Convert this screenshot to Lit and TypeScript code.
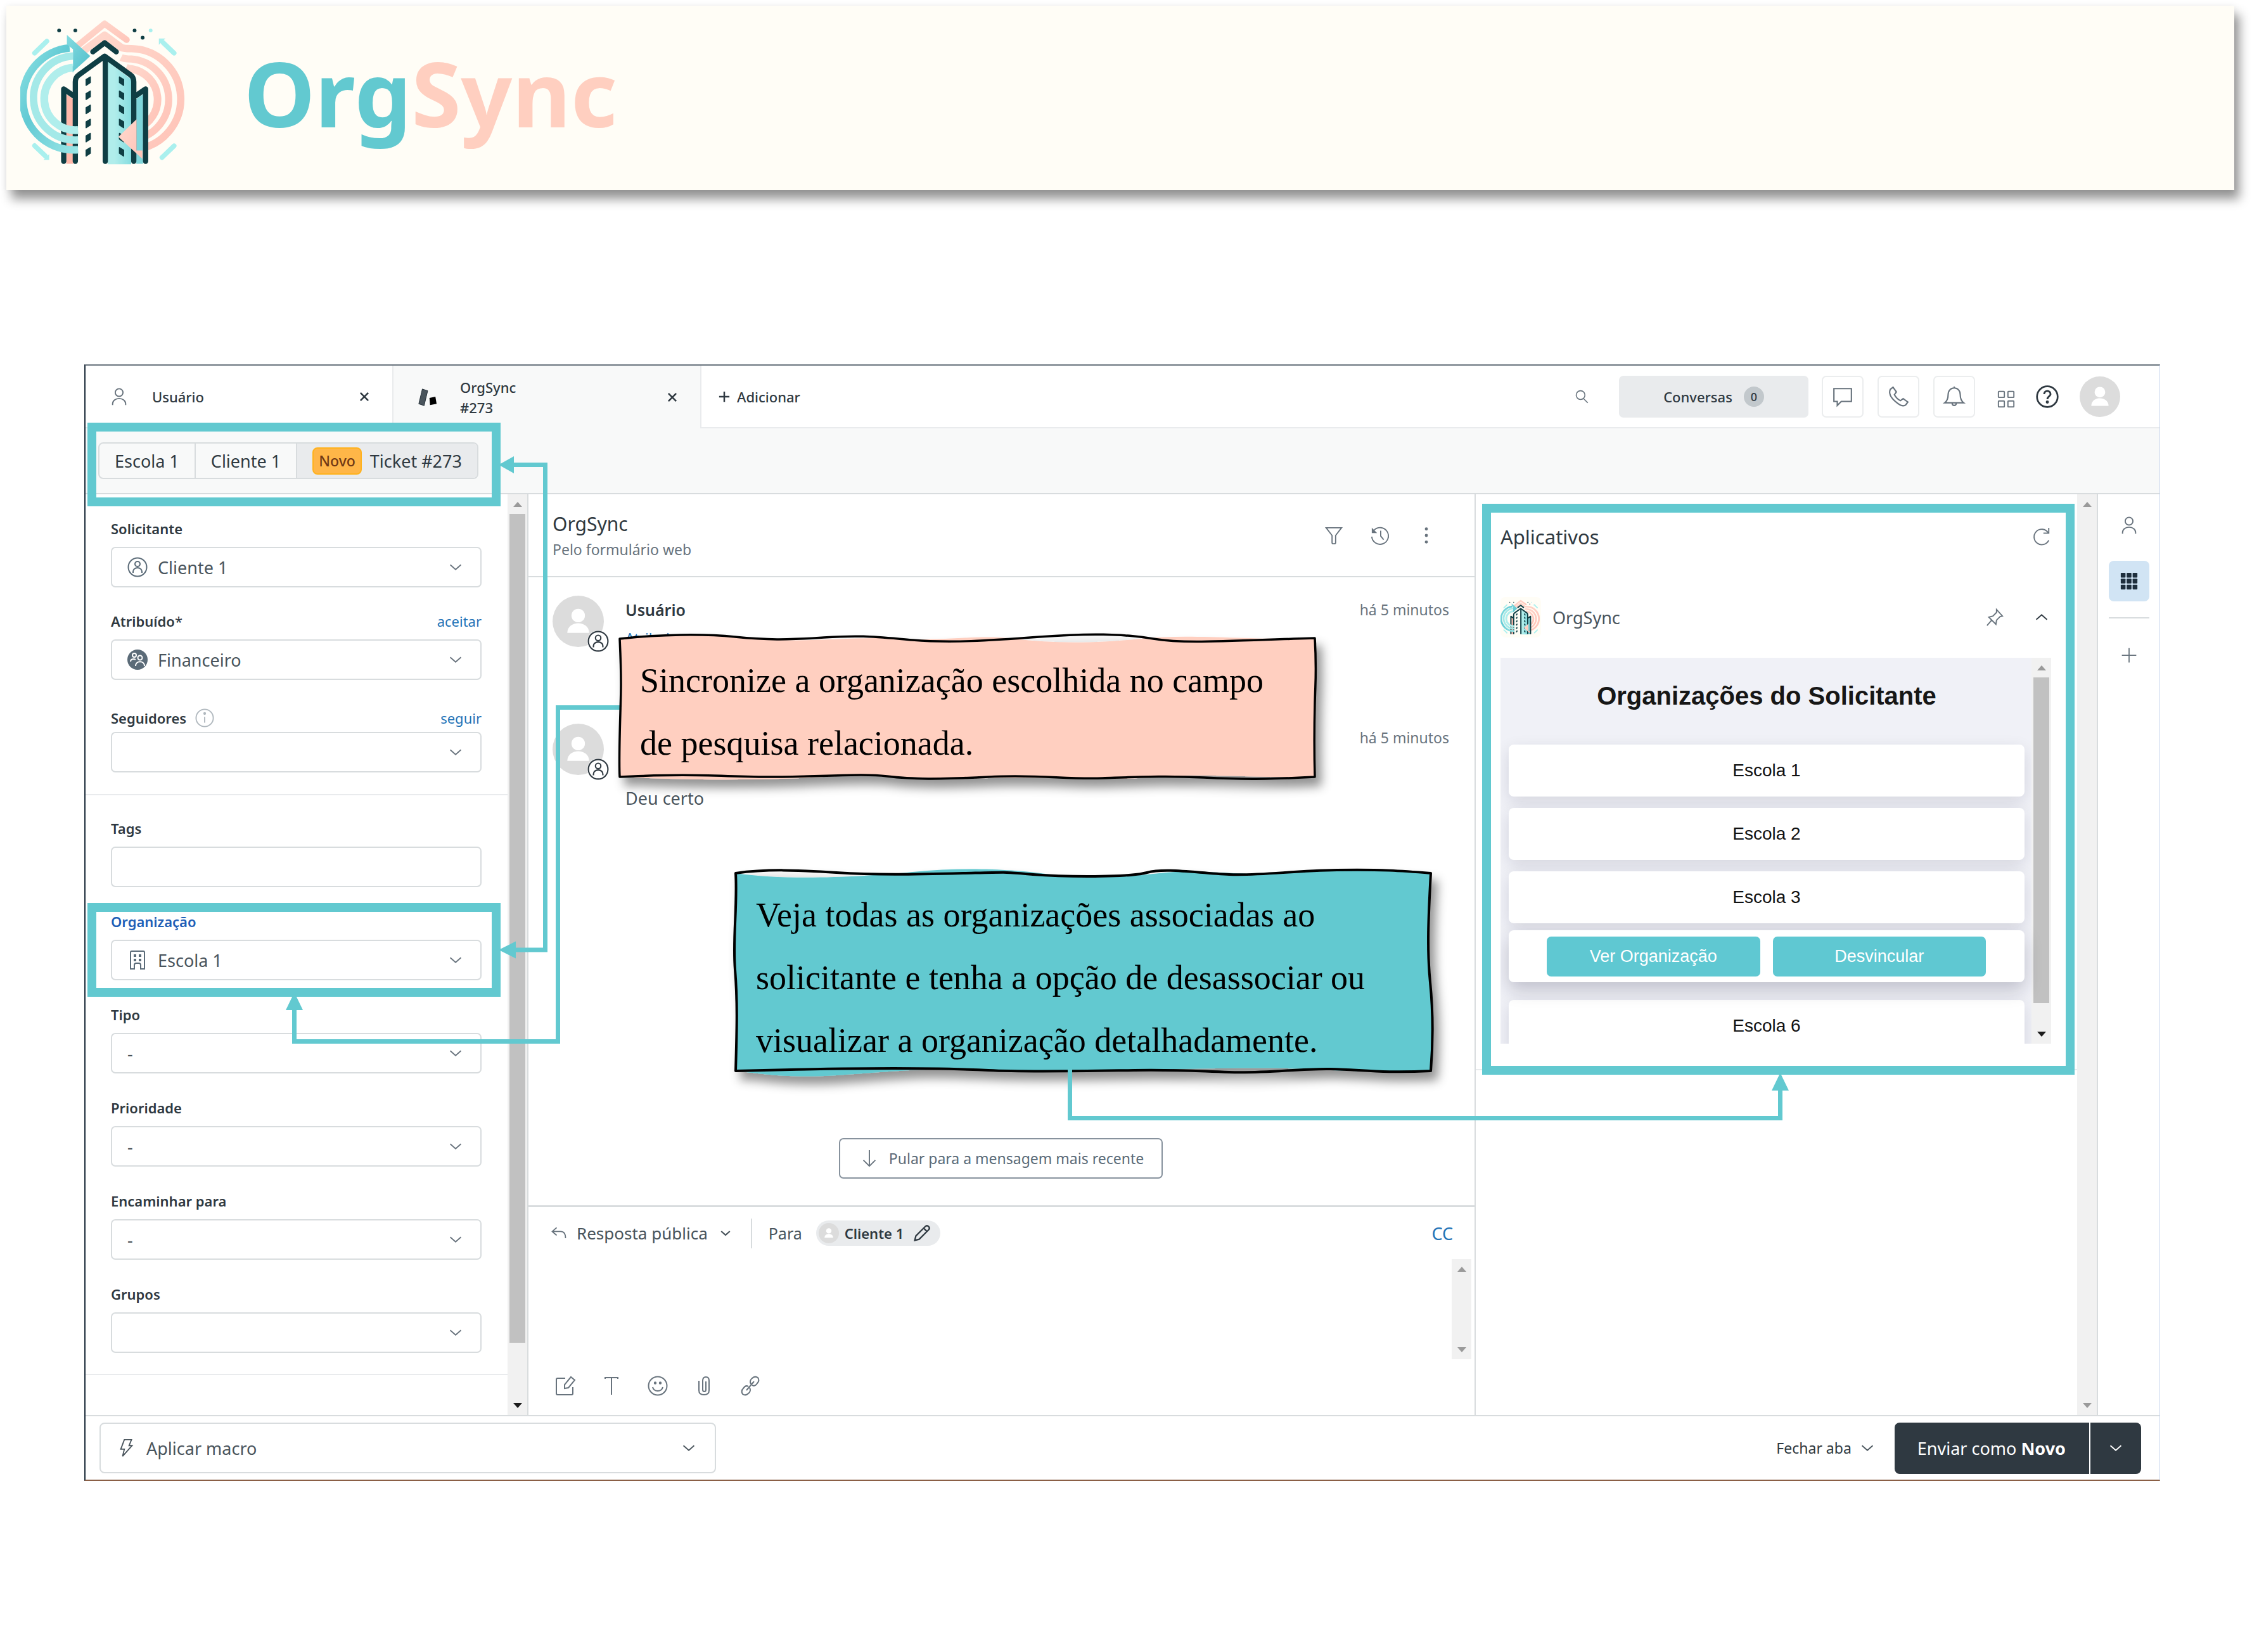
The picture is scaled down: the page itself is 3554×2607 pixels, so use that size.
import { LitElement, html, svg, css, nothing, type TemplateResult } from "lit";
import { customElement, property } from "lit/decorators.js";

/* Line icons, all drawn in a 32 x 32 box. */
const icons: Record<string, TemplateResult> = {
  user: svg`<circle cx="16" cy="9" r="6.5"/><path d="M5 30v-2a11 9 0 0 1 22 0v2"/>`,
  chevron: svg`<path d="M7 12l9 8 9-8"/>`,
  chevronUp: svg`<path d="M7 20l9-8 9 8"/>`,
  close: svg`<path d="M9 9l14 14M23 9L9 23" stroke-width="3"/>`,
  plus: svg`<path d="M16 3v26M3 16h26"/>`,
  search: svg`<circle cx="14" cy="13" r="8.5"/><path d="M20 20l8 8"/>`,
  chat: svg`<path d="M3 4h26v19H14l-6 6v-6H3z"/>`,
  phone: svg`<path d="M4 5l4-3 5 7-3 4c2 4 5 7 9 9l4-3 7 5-3 4c-3 3-8 1-12-2S6 19 4 14s-1-7 0-9z"/>`,
  bell: svg`<path d="M2 25h28c-4-3-5-6-5-12 0-6-4-10-9-10s-9 4-9 10c0 6-1 9-5 12zM13 26a3 3 0 0 0 6 0M16 3V1"/>`,
  grid: svg`<rect x="3" y="4" width="10" height="10" rx="1"/><rect x="19" y="4" width="10" height="10" rx="1"/><rect x="3" y="20" width="10" height="10" rx="1"/><rect x="19" y="20" width="10" height="10" rx="1"/>`,
  help: svg`<circle cx="16" cy="16" r="14.5" stroke-width="2.4"/><path d="M11.500 12.500c0-6 9-6 9 0 0 3-4.500 3-4.500 7" stroke-width="2.600"/><circle cx="16" cy="23.500" r="1.200" fill="currentColor"/>`,
  person: svg`<circle cx="16" cy="16" r="14.5"/><circle cx="16" cy="11" r="4"/><path d="M9 25v-2a7 6 0 0 1 14 0v2"/>`,
  group: svg`<circle cx="16" cy="16" r="16" fill="currentColor" stroke="none"/><g stroke="#fff" stroke-width="2"><circle cx="11" cy="9" r="3"/><circle cx="20" cy="13" r="3.500"/><path d="M5 19c0-4 5-5 8-3M13 26c0-9 14-9 14 0"/></g>`,
  info: svg`<circle cx="16" cy="16" r="14.500"/><path d="M16 14v10"/><circle cx="16" cy="8.500" r="1.300" fill="currentColor"/>`,
  building: svg`<path d="M5 30V4q0-2 2-2h18q2 0 2 2v26h-6v-6q0-3-3-3h-4q-3 0-3 3v6z"/><g fill="currentColor" stroke="none"><rect x="10" y="7" width="4" height="4"/><rect x="18" y="7" width="4" height="4"/><rect x="10" y="14" width="4" height="4"/><rect x="18" y="14" width="4" height="4"/></g>`,
  filter: svg`<path d="M3 3h26L19 16v12q0 2-2 2h-2q-2 0-2-2V16z"/>`,
  history: svg`<path d="M6 7A14 14 0 1 1 2 18M17 8v9l5 6"/><path d="M2 3v9h9z" fill="currentColor" stroke="none"/>`,
  dots: svg`<g fill="currentColor" stroke="none"><circle cx="16" cy="5" r="2.600"/><circle cx="16" cy="16" r="2.600"/><circle cx="16" cy="27" r="2.600"/></g>`,
  down: svg`<path d="M16 2v27M6 19l10 10 10-10"/>`,
  reply: svg`<path d="M12 6L4 13l8 7M4 13h15q9 0 9 12"/>`,
  pencil: svg`<path d="M3 29l2-8L22 4q3-3 6 0t0 6L11 27zM19 7l6 6" stroke-width="2.600"/>`,
  compose: svg`<path d="M16 4H4q-2 0-2 2v22q0 2 2 2h22q2 0 2-2V18M15 20v-6L25 2l6 5-10 12z"/>`,
  type: svg`<path d="M6 5V3h20v2M16 3v27"/>`,
  smile: svg`<circle cx="16" cy="16" r="14.500"/><path d="M8 18c2 8 14 8 16 0"/><circle cx="12" cy="11.500" r="1.200" fill="currentColor"/><circle cx="20" cy="11.500" r="1.200" fill="currentColor"/>`,
  clip: svg`<path d="M8 8v15q0 7 8 7t8-7V8q0-6-5-6t-5 6v14q0 3 2.500 3t2.500-3V9"/>`,
  link: svg`<path d="M13 17c-3-2-6 0-8 3-3 3-3 6-1 9 3 2 6 2 9-1 3-2 4-6 2-9M19 15c3 2 6 0 8-3 3-3 3-6 1-9-3-2-6-2-9 1-3 2-4 6-2 9M10 23L22 9"/>`,
  bolt: svg`<path d="M12 2h12l-4 10h5L9 30l3-12H6z"/>`,
  refresh: svg`<path d="M28 22A13 13 0 1 1 27 9M28 1v9h-9"/>`,
  pin: svg`<path d="M19 3l10 11-4 1-6 6-1 7L6 16l7-2 6-6zM11 21l-8 9"/>`,
  apps: svg`<g fill="currentColor" stroke="none">${[2, 12, 22].map((y) => [2, 12, 22].map((x) => svg`<rect x=${x} y=${y} width="8" height="8" rx="1"/>`))}</g>`,
  ticket: svg`<path d="M8 2l9 3-6 25-9-3z" fill="#49545c" stroke="#1f2a33" stroke-width="1"/><path d="M20 17l10-2 2 12-11 2z" fill="#000" stroke="none"/>`,
};

const icon = (name: string, cls = "") =>
  html`<svg class="icon ${cls}" viewBox="0 0 32 32" aria-hidden="true">${icons[name]}</svg>`;

const baseStyles = css`
  * { box-sizing: border-box; }
  button, input, select, textarea {
    font: inherit; color: inherit; background: none; border: 0; margin: 0; padding: 0; outline: none;
  }
  button { cursor: pointer; white-space: nowrap; }
  a { text-decoration: none; }
  .icon {
    width: 30px; height: 30px; flex: none; display: block; overflow: visible;
    fill: none; stroke: currentColor; stroke-width: 2; color: #68737d;
  }
`;

@customElement("org-logo")
export class OrgLogo extends LitElement {
  static styles = css`
    :host { display: block; flex: none; }
    svg { display: block; width: 100%; height: 100%; }
  `;
  render() {
    const rows = [0, 1, 2, 3, 4, 5].map((i) => 303 + i * 67);
    return html`
      <svg viewBox="28 14 802 732" role="img" aria-label="OrgSync">
        <defs>
          <linearGradient id="teal" x1="0" y1="0" x2="1" y2="1">
            <stop offset="0" stop-color="#8be0e2" /><stop offset="0.4" stop-color="#62cad4" /><stop offset="1" stop-color="#9ae6e6" />
          </linearGradient>
          <linearGradient id="pink" x1="0" y1="0" x2="1" y2="1">
            <stop offset="0" stop-color="#ffd8cd" /><stop offset="1" stop-color="#ffc4b8" />
          </linearGradient>
          <linearGradient id="head" x1="0" y1="0" x2="1" y2="1">
            <stop offset="0" stop-color="#84dbe0" /><stop offset="1" stop-color="#52bfcb" />
          </linearGradient>
          <linearGradient id="shade" x1="0" y1="0" x2="1" y2="0">
            <stop offset="0.3" stop-color="#b0edeb" /><stop offset="1" stop-color="#86dde0" />
          </linearGradient>
        </defs>
        <g fill="none" stroke="url(#pink)" stroke-linejoin="round">
          <path d="M300 158L428 54 532 130" stroke-width="30" stroke-linecap="round" />
          <path d="M326 184L428 108 506 166Q514 172 555 172A239 239 0 0 1 580 648" stroke-width="35" />
          <path d="M506 214Q520 221 555 221A192 192 0 0 1 580 600" stroke-width="34" />
          <path d="M530 262Q545 268 555 268A147 147 0 0 1 580 552" stroke-width="36" />
        </g>
        <path d="M302 720V318L420 232V720z" fill="#fffdf6" />
        <path d="M442 720V232L554 318V720z" fill="url(#shade)" />
        <path d="M246 718V388L278 410V718z" fill="#ffb9ab" />
        <path d="M578 718V410L610 388V718z" fill="#7fd6db" />
        <g fill="none" stroke="#0f3e44" stroke-width="25" stroke-linejoin="round" stroke-linecap="round">
          <path d="M234 706V363L280 395M622 706V363L576 395" />
          <path d="M289 706V330Q289 308 305 297L428 208 551 297Q566 308 566 330V706M431 215V706" />
          <path d="M372 187L428 144 483 187" />
        </g>
        <g fill="#0f3e44" stroke="#0f3e44" stroke-width="5" stroke-linejoin="round">
          ${rows.map((y) => svg`<path d=${`M340 ${y + 15}L360 ${y + 3}V${y + 30}L340 ${y + 43}z`}/><path d=${`M518 ${y + 15}L498 ${y + 3}V${y + 30}L518 ${y + 43}z`}/>`)}
        </g>
        <g fill="none">
          <path d="M303 670V530" stroke="#fffdf6" stroke-width="3" />
          <path d="M302 651A241 241 0 0 1 262 169" stroke="url(#teal)" stroke-width="36" />
          <path d="M302 605A195 195 0 0 1 278 207" stroke="#a4e9e8" stroke-width="35" />
          <path d="M302 558A148 148 0 0 1 278 262" stroke="#b0eeec" stroke-width="37" />
          <path d="M278 255V285" stroke="#7fd9de" stroke-width="4" />
        </g>
        <path d="M249 107L360 207 278 282V175L249 152z" fill="url(#head)" />
        <path d="M493 590L579 507V655H607V695z" fill="url(#pink)" />
        <g stroke="#aaf0ee" stroke-width="23" stroke-linecap="round" fill="#aaf0ee">
          <path d="M96 193L154 137M757 193L706 144M96 632L146 680M700 688L757 633" />
          <path d="M685 124H716L685 154zM165 699H138L165 672z" stroke="none" />
        </g>
        <g fill="#0f3e44"><circle cx="212" cy="86" r="9" /><circle cx="289" cy="86" r="9" /><circle cx="570" cy="86" r="9" /><circle cx="608" cy="120" r="9" /></g>
        <circle cx="646" cy="86" r="9" fill="#aaf0ee" />
      </svg>
    `;
  }
}

@customElement("scroll-track")
export class ScrollTrack extends LitElement {
  @property({ type: Number }) thumb = 0;
  @property() down = "#1c1c1c";
  static styles = css`
    :host { display: flex; flex-direction: column; width: 31px; flex: none; background: #f1f1f1; }
    .cap { height: 31px; display: grid; place-items: center; flex: none; }
    .rail { flex: 1; padding: 0 3px; }
    .thumb { background: #c1c1c1; }
    svg { display: block; width: 14px; height: 8px; }
  `;
  render() {
    return html`
      <div class="cap"><svg viewBox="0 0 14 8"><path d="M0 8L7 0l7 8z" fill="#9a9a9a" /></svg></div>
      <div class="rail">${this.thumb ? html`<div class="thumb" style="height:${this.thumb}%"></div>` : nothing}</div>
      <div class="cap"><svg viewBox="0 0 14 8"><path d="M0 0L7 8l7-8z" fill=${this.down} /></svg></div>
    `;
  }
}

interface Field {
  id: string;
  label: string;
  value?: string;
  icon?: string;
  action?: string;
  info?: boolean;
  required?: boolean;
  text?: boolean;
  linked?: boolean;
}

const mainFields: Field[] = [
  { id: "requester", label: "Solicitante", value: "Cliente 1", icon: "person" },
  { id: "assignee", label: "Atribuído", value: "Financeiro", icon: "group", action: "aceitar", required: true },
  { id: "followers", label: "Seguidores", action: "seguir", info: true },
];

const extraFields: Field[] = [
  { id: "tags", label: "Tags", text: true },
  { id: "organization", label: "Organização", value: "Escola 1", icon: "building", linked: true },
  { id: "type", label: "Tipo", value: "-" },
  { id: "priority", label: "Prioridade", value: "-" },
  { id: "forward", label: "Encaminhar para", value: "-" },
  { id: "groups", label: "Grupos" },
];

@customElement("ticket-fields")
export class TicketFields extends LitElement {
  static styles = [
    baseStyles,
    css`
      :host { display: flex; width: 699px; flex: none; border-right: 2px solid #d8dcde; }
      .form { flex: 1; padding-top: 39px; }
      .fields { display: flex; flex-direction: column; gap: 38px; padding: 0 41px 34px 40px; border-bottom: 2px solid #e9ebed; }
      .extra { gap: 39px; padding-top: 37px; padding-bottom: 33px; }
      .rest { height: 63px; }
      .head { display: flex; align-items: center; justify-content: space-between; height: 30px; margin-bottom: 14px; font-size: 22px; line-height: 30px; }
      .tight { height: 44px; margin-bottom: 0; }
      .name { display: flex; align-items: center; gap: 14px; font-weight: 600; color: #2f3941; }
      .required { font-weight: 400; margin-left: -14px; }
      .linked { color: #1f5fb7; }
      .action { color: #1f73b7; }
      .box { display: flex; align-items: center; height: 64px; border: 2px solid #d8dcde; border-radius: 7px; padding: 0 24px; gap: 16px; }
      .control { flex: 1; width: 100%; height: 100%; appearance: none; font-size: 27px; color: #49545c; }
      .box .icon { width: 32px; height: 32px; }
      .box .arrow { width: 30px; height: 30px; }
      .box .dark { color: #5b6b78; }
      .info { color: #b0b8be; }
    `,
  ];

  private field(f: Field) {
    return html`
      <div>
        <div class="head ${f.info ? "tight" : ""}">
          <label class="name ${f.linked ? "linked" : ""}" for=${f.id}>
            <span>${f.label}</span>${f.required ? html`<span class="required">*</span>` : nothing}
            ${f.info ? icon("info", "info") : nothing}
          </label>
          ${f.action ? html`<a class="action" href="#">${f.action}</a>` : nothing}
        </div>
        <div class="box">
          ${f.icon ? icon(f.icon, "dark") : nothing}
          ${f.text
            ? html`<input class="control" id=${f.id} type="text" />`
            : html`<select class="control" id=${f.id}><option>${f.value ?? ""}</option></select>${icon("chevron", "arrow")}`}
        </div>
      </div>
    `;
  }

  render() {
    return html`
      <div class="form">
        <div class="fields">${mainFields.map((f) => this.field(f))}</div>
        <div class="fields extra">${extraFields.map((f) => this.field(f))}</div>
        <div class="rest"></div>
      </div>
      <scroll-track thumb="94"></scroll-track>
    `;
  }
}

@customElement("user-avatar")
export class UserAvatar extends LitElement {
  @property({ type: Boolean }) badge = false;
  static styles = [
    baseStyles,
    css`
      :host { display: block; position: relative; width: 64px; height: 64px; flex: none; }
      .face { display: block; width: 100%; height: 100%; }
      .badge { position: absolute; right: -8px; bottom: -8px; width: 34px; height: 34px; border-radius: 50%; background: #fff; color: #2f3941; }
    `,
  ];
  render() {
    return html`
      <svg class="face" viewBox="0 0 80 80" aria-hidden="true">
        <circle cx="40" cy="40" r="40" fill="#dcdcdc" />
        <circle cx="40" cy="31" r="10.500" fill="#fff" />
        <path d="M23 58c0-20 34-20 34 0z" fill="#fff" />
      </svg>
      ${this.badge ? icon("person", "badge") : nothing}
    `;
  }
}

@customElement("ticket-thread")
export class TicketThread extends LitElement {
  static styles = [
    baseStyles,
    css`
      :host { display: flex; flex-direction: column; flex: 1; min-width: 0; border-right: 2px solid #d8dcde; }
      .top { display: flex; justify-content: space-between; align-items: center; height: 131px; padding: 0 60px 0 38px; border-bottom: 2px solid #d8dcde; }
      .title { margin: 0; font-weight: 400; font-size: 30px; line-height: 44px; color: #2f3941; }
      .channel { margin: 0; font-size: 23px; line-height: 36px; color: #68737d; }
      .tools { display: flex; gap: 42px; }
      .tools button { width: 31px; }
      .messages { flex: 1; display: flex; flex-direction: column; padding: 29px 40px 42px 38px; }
      .message { display: flex; gap: 34px; height: 202px; }
      .message user-avatar { width: 81px; height: 81px; }
      .content { flex: 1; }
      .line { display: flex; justify-content: space-between; height: 44px; line-height: 44px; }
      .author { font-size: 25px; font-weight: 600; color: #2f3941; }
      .time { font-size: 23px; color: #68737d; }
      .assign { display: block; font-size: 22px; line-height: 44px; color: #1f73b7; }
      .text { margin: 52px 0 0; font-size: 27px; line-height: 44px; color: #49545c; }
      .jump { display: flex; align-items: center; gap: 16px; margin: auto auto 0; height: 64px; padding: 0 28px 0 31px; border: 2px solid #87929d; border-radius: 7px; font-size: 23px; color: #5b6b78; }
      .composer { border-top: 3px solid #d8dcde; display: flex; flex-direction: column; height: 331px; }
      .row { display: flex; align-items: center; height: 82px; padding: 0 34px 0 34px; font-size: 26px; color: #49545c; }
      .mode { display: flex; align-items: center; gap: 14px; }
      .mode .arrow { width: 24px; height: 24px; margin-left: 2px; color: #49545c; stroke-width: 3; }
      .mode .back { width: 28px; height: 28px; }
      .to { border-left: 2px solid #d8dcde; margin-left: 28px; padding-left: 26px; height: 47px; line-height: 47px; font-size: 25px; }
      .chip { display: flex; align-items: center; gap: 9px; height: 40px; margin-left: 22px; padding: 0 15px 0 4px; border-radius: 20px; background: #e9ebed; color: #2f3941; font-size: 22px; font-weight: 600; }
      .chip user-avatar { width: 32px; height: 32px; }
      .chip .icon { width: 28px; height: 28px; margin-left: 6px; color: #2f3941; }
      .copy { margin-left: auto; font-size: 27px; color: #1f73b7; }
      .write { display: flex; height: 158px; padding-right: 5px; }
      .write textarea { flex: 1; resize: none; overflow: hidden; padding: 0 38px; font-size: 26px; }
      .bar { display: flex; gap: 41px; padding: 26px 0 0 42px; }
      .bar .icon { width: 32px; height: 32px; }
    `,
  ];
  render() {
    return html`
      <header class="top">
        <div>
          <h1 class="title">OrgSync</h1>
          <p class="channel">Pelo formulário web</p>
        </div>
        <div class="tools">
          <button aria-label="Filtrar">${icon("filter")}</button>
          <button aria-label="Eventos">${icon("history")}</button>
          <button aria-label="Mais opções">${icon("dots")}</button>
        </div>
      </header>
      <section class="messages">
        <article class="message">
          <user-avatar badge></user-avatar>
          <div class="content">
            <div class="line"><span class="author">Usuário</span><span class="time">há 5 minutos</span></div>
            <a class="assign" href="#">Atribuir</a>
          </div>
        </article>
        <article class="message">
          <user-avatar badge></user-avatar>
          <div class="content">
            <div class="line"><span></span><span class="time">há 5 minutos</span></div>
            <p class="text">Deu certo</p>
          </div>
        </article>
        <button class="jump">${icon("down")}Pular para a mensagem mais recente</button>
      </section>
      <section class="composer">
        <div class="row">
          <button class="mode">${icon("reply", "back")}<span>Resposta pública</span>${icon("chevron", "arrow")}</button>
          <span class="to">Para</span>
          <button class="chip"><user-avatar></user-avatar>Cliente 1${icon("pencil")}</button>
          <a class="copy" href="#">CC</a>
        </div>
        <div class="write">
          <textarea aria-label="Resposta"></textarea>
          <scroll-track down="#9a9a9a"></scroll-track>
        </div>
        <div class="bar">
          <button aria-label="Editor">${icon("compose")}</button>
          <button aria-label="Texto">${icon("type")}</button>
          <button aria-label="Emoji">${icon("smile")}</button>
          <button aria-label="Anexo">${icon("clip")}</button>
          <button aria-label="Link">${icon("link")}</button>
        </div>
      </section>
    `;
  }
}

@customElement("apps-panel")
export class AppsPanel extends LitElement {
  static styles = [
    baseStyles,
    css`
      :host { display: flex; width: 982px; flex: none; border-right: 2px solid #d8dcde; }
      .body { flex: 1; display: flex; flex-direction: column; }
      .app { padding: 0 41px 40px 39px; border-bottom: 2px solid #e9ebed; }
      .top { display: flex; justify-content: space-between; align-items: center; height: 134px; }
      .title { margin: 0; font-size: 31px; font-weight: 400; color: #2f3941; }
      .name { display: flex; align-items: center; height: 64px; margin: 28px 0 32px; font-size: 27px; color: #49545c; }
      .mark { width: 64px; height: 64px; margin-right: 18px; border-radius: 8px; background: #fffdf6; }
      .name .pin { margin: 0 44px 0 auto; }
      .name .up { color: #2f3941; }
      .frame { display: flex; height: 609px; overflow: hidden; background: #f0f1f7; font-family: "Liberation Sans", Arial, sans-serif; color: #111; }
      .orgs { flex: 1; padding: 0 11px 0 13px; }
      .heading { margin: 0; font-size: 40px; line-height: 120px; height: 137px; text-align: center; color: #161616; }
      .list { list-style: none; margin: 0; padding: 0; }
      .card { height: 82px; margin-bottom: 18px; border-radius: 8px; background: #fff; display: flex; align-items: center; justify-content: center; gap: 20px; font-size: 28px; box-shadow: 0 8px 26px rgba(20, 20, 50, 0.12); }
      .near { margin-bottom: 11px; }
      .active { margin-bottom: 28px; box-shadow: 0 12px 28px rgba(20, 20, 50, 0.22); position: relative; }
      .do { flex: 1; height: 63px; border-radius: 7px; background: #5fc8d2; color: #fff; font-size: 27px; }
      .do:first-child { margin-left: 60px; }
      .do:last-child { margin-right: 61px; }
    `,
  ];
  render() {
    return html`
      <div class="body">
        <section class="app">
          <div class="top">
            <h2 class="title">Aplicativos</h2>
            <button aria-label="Atualizar">${icon("refresh")}</button>
          </div>
          <div class="name">
            <org-logo class="mark"></org-logo>OrgSync
            <button class="pin" aria-label="Fixar">${icon("pin")}</button>
            <button aria-label="Recolher">${icon("chevronUp", "up")}</button>
          </div>
          <div class="frame">
            <div class="orgs">
              <h3 class="heading">Organizações do Solicitante</h3>
              <ul class="list">
                <li class="card">Escola 1</li>
                <li class="card">Escola 2</li>
                <li class="card near">Escola 3</li>
                <li class="card active">
                  <button class="do">Ver Organização</button>
                  <button class="do">Desvincular</button>
                </li>
                <li class="card">Escola 6</li>
              </ul>
            </div>
            <scroll-track thumb="94"></scroll-track>
          </div>
        </section>
      </div>
      <scroll-track down="#9a9a9a"></scroll-track>
    `;
  }
}

/* Callouts and connectors laid over the ticket screen. */
@customElement("guide-overlay")
export class GuideOverlay extends LitElement {
  static styles = css`
    :host { position: absolute; inset: 0; pointer-events: none; }
    .art { position: absolute; inset: 0; width: 100%; height: 100%; overflow: visible; }
    .note {
      position: absolute; width: 1097px; box-sizing: border-box; margin: 0; padding: 18px 32px;
      font: 54px/99px "Liberation Serif", "Times New Roman", serif; color: #000;
    }
    .sync { left: 843px; top: 430px; }
    .view { left: 1026px; top: 800px; }
  `;
  render() {
    return html`
      <svg class="art" viewBox="135 577 3273 1758" preserveAspectRatio="xMinYMin slice" aria-hidden="true">
        <defs>
          <filter id="drop" x="-5%" y="-10%" width="115%" height="130%">
            <feDropShadow dx="9" dy="13" stdDeviation="8" flood-color="#000" flood-opacity="0.42" />
          </filter>
        </defs>
        <g fill="none" stroke="#62c9d0" stroke-width="14">
          <rect x="145" y="674" width="638" height="118" />
          <rect x="145" y="1432" width="638" height="134" />
          <rect x="2346" y="802" width="921" height="887" />
        </g>
        <g fill="none" stroke="#62c9d0" stroke-width="7">
          <path d="M805 733.500H860.500V1499H805" />
          <path d="M985 1116.500H880.500V1643.500H464.500V1590" />
        </g>
        <g fill="#62c9d0">
          <path d="M787 733.500L811 720V747zM787 1499L814 1485.500V1512.500zM464.500 1566L451 1594H478z" />
        </g>
        <g filter="url(#drop)">
          <path fill="#ffcfc0" d="M978 1008C1040 999 1120 1001 1200 1008S1340 1004 1420 1008S1540 1001 1600 1008S1720 1016 1800 1008S1960 1010 2075 1008C2079 1060 2073 1150 2075 1226C1980 1228 1900 1220 1830 1226S1640 1226 1560 1228S1380 1221 1300 1226S1100 1232 978 1226C976 1150 982 1080 978 1008z" />
          <path fill="none" stroke="#000" stroke-width="3.500" stroke-linejoin="round" d="M978 1008C1040 1001 1110 1000 1160 1005S1240 1010 1300 1006S1380 1005 1440 1010S1560 1011 1640 1005S1770 1000 1820 1008S1920 1012 2075 1007C2078 1060 2076 1070 2075 1110S2074 1190 2075 1226C2000 1230 1960 1230 1900 1227S1800 1226 1740 1228S1640 1222 1560 1226S1440 1230 1400 1225S1300 1226 1220 1226S1100 1220 978 1226C976 1190 980 1110 980 1080S979 1030 978 1008z" />
        </g>
        <g filter="url(#drop)">
          <path fill="#62c9d0" d="M1161 1378C1240 1390 1360 1384 1440 1376S1600 1372 1650 1379S1760 1386 1830 1378S1960 1384 2040 1377S2180 1374 2258 1378C2254 1450 2252 1500 2257 1550S2262 1640 2258 1690C2180 1692 2120 1690 2060 1687S1900 1686 1820 1688S1640 1690 1540 1688S1400 1692 1320 1697S1200 1694 1161 1690C1164 1600 1156 1480 1161 1378z" />
          <path fill="none" stroke="#000" stroke-width="4" stroke-linejoin="round" d="M1161 1378C1210 1371 1260 1373 1320 1377S1440 1380 1520 1378S1580 1376 1630 1380S1780 1385 1810 1377S1890 1378 1940 1380S2040 1374 2110 1373S2210 1374 2258 1378C2254 1450 2252 1500 2257 1550S2262 1640 2258 1690C2180 1694 2150 1688 2100 1687S2000 1694 1940 1692S1860 1688 1790 1689S1620 1692 1560 1689S1380 1684 1161 1690C1163 1620 1164 1580 1160 1530S1164 1430 1161 1378z" />
        </g>
        <path fill="none" stroke="#62c9d0" stroke-width="7" d="M1688.500 1688V1764.500H2809.500V1716" />
        <path fill="#62c9d0" d="M2809.500 1693L2796 1721H2823z" />
      </svg>
      <p class="note sync">Sincronize a organização escolhida no campo de pesquisa relacionada.</p>
      <p class="note view">Veja todas as organizações associadas ao solicitante e tenha a opção de desassociar ou visualizar a organização detalhadamente.</p>
    `;
  }
}

@customElement("app-root")
export class AppRoot extends LitElement {
  static styles = [
    baseStyles,
    css`
      :host { display: block; background: #fff; font-family: "Noto Sans", "Open Sans", sans-serif; color: #2f3941; }
      .banner { display: flex; align-items: center; gap: 86px; height: 291px; margin: 9px 28px 0 10px; padding: 0 22px 17px; background: #fffdf6; box-shadow: 8px 14px 16px rgba(0, 0, 0, 0.42), 0 0 10px rgba(0, 0, 0, 0.06); }
      .logo { width: 267px; height: 244px; }
      .brand { font-size: 142px; font-weight: 700; line-height: 1; color: #62c9d0; }
      .accent { color: #ffcfc0; }
      .screen { position: relative; margin: 275px 145px 0 133px; border: solid #68737d; border-width: 2px 1px 2px 2px; border-color: #68737d #c9d7ee #8a5f45 #1f2f3d; }
      .tabs { display: flex; align-items: stretch; height: 99px; border-bottom: 2px solid #e9ebed; font-size: 22px; }
      .tab { display: flex; align-items: center; width: 486px; padding: 0 30px 0 38px; border-right: 2px solid #e9ebed; font-weight: 500; line-height: 32px; }
      .tab .kind { margin-right: 37px; }
      .tab button { margin-left: auto; }
      .tab .x { width: 28px; height: 28px; color: #2f3941; }
      .current { background: #f8f9f9; margin-bottom: -2px; }
      .add { display: flex; align-items: center; gap: 10px; padding: 0 26px; font-weight: 500; }
      .add .icon { width: 20px; height: 20px; stroke-width: 4; color: #2f3941; }
      .global { display: flex; align-items: center; margin-left: auto; padding-right: 62px; }
      .find .icon { width: 26px; height: 26px; }
      .talks { display: flex; align-items: center; justify-content: center; gap: 18px; width: 299px; height: 66px; margin: 0 21px 0 46px; border-radius: 7px; background: #e9ebed; font-weight: 500; }
      .count { display: grid; place-items: center; width: 32px; height: 32px; border-radius: 50%; background: #c2c8cc; font-size: 18px; }
      .square { display: grid; place-items: center; width: 66px; height: 66px; margin-right: 22px; border: 2px solid #ebedee; border-radius: 7px; }
      .square .icon { width: 34px; height: 34px; }
      .apps { margin: 6px 32px 0 12px; }
      .ask { margin-right: 33px; }
      .ask .icon { width: 36px; height: 36px; color: #2f3941; }
      .trail { display: flex; align-items: center; height: 104px; padding: 0 20px; border-bottom: 2px solid #d8dcde; background: #f8f9f9; }
      .crumbs { display: flex; height: 58px; border: 2px solid #d8dcde; border-radius: 8px; font-size: 27px; overflow: hidden; }
      .crumb { display: flex; align-items: center; gap: 13px; padding: 0 24px; border-right: 2px solid #d8dcde; color: #2f3941; }
      .here { background: #e9ebed; border-right: 0; }
      .status { height: 43px; line-height: 39px; padding: 0 8px; border: 2px solid #ffb21c; border-radius: 8px; background: #ffb648; color: #703815; font-size: 23px; font-weight: 500; }
      .body { display: flex; align-items: stretch; }
      .rail { display: flex; flex-direction: column; align-items: center; width: 97px; flex: none; }
      .rail .who { margin-top: 34px; }
      .rail .tile { display: grid; place-items: center; width: 64px; height: 64px; margin: 41px 0 25px; border-radius: 8px; background: #d1e4f4; }
      .rail .tile .icon { color: #1f2f3d; }
      .rail .more { width: 64px; padding: 44px 18px; border-top: 2px solid #d8dcde; }
      .rail .more .icon { width: 28px; height: 28px; }
      .foot { display: flex; align-items: center; height: 102px; padding: 0 29px 0 22px; border-top: 2px solid #d8dcde; }
      .macro { display: flex; align-items: center; gap: 16px; width: 973px; height: 80px; padding: 0 26px; border: 2px solid #d8dcde; border-radius: 8px; }
      .macro select { flex: 1; appearance: none; font-size: 27px; color: #49545c; }
      .macro .icon { color: #49545c; }
      .close { display: flex; align-items: center; gap: 10px; margin: 0 28px 0 auto; font-size: 23px; }
      .close .icon { color: #49545c; }
      .send { height: 81px; padding: 0 37px 0 36px; border-radius: 8px 0 0 8px; background: #2f3941; color: #fff; font-size: 27px; }
      .split { height: 81px; padding: 0 25px; margin-left: 2px; border-radius: 0 8px 8px 0; background: #2f3941; }
      .split .icon { color: #fff; }
    `,
  ];
  render() {
    return html`
      <header class="banner">
        <org-logo class="logo"></org-logo>
        <div class="brand">Org<span class="accent">Sync</span></div>
      </header>
      <main class="screen">
        <nav class="tabs">
          <div class="tab">
            ${icon("user", "kind")}<span>Usuário</span>
            <button aria-label="Fechar Usuário">${icon("close", "x")}</button>
          </div>
          <div class="tab current">
            ${icon("ticket", "kind")}<span>OrgSync<br />#273</span>
            <button aria-label="Fechar OrgSync">${icon("close", "x")}</button>
          </div>
          <button class="add">${icon("plus")}Adicionar</button>
          <div class="global">
            <button class="find" aria-label="Buscar">${icon("search")}</button>
            <button class="talks">Conversas<span class="count">0</span></button>
            <button class="square" aria-label="Chat">${icon("chat")}</button>
            <button class="square" aria-label="Telefone">${icon("phone")}</button>
            <button class="square" aria-label="Notificações">${icon("bell")}</button>
            <button class="apps" aria-label="Produtos">${icon("grid")}</button>
            <button class="ask" aria-label="Ajuda">${icon("help")}</button>
            <user-avatar></user-avatar>
          </div>
        </nav>
        <div class="trail">
          <div class="crumbs">
            <a class="crumb" href="#">Escola 1</a>
            <a class="crumb" href="#">Cliente 1</a>
            <a class="crumb here" href="#"><span class="status">Novo</span>Ticket #273</a>
          </div>
        </div>
        <div class="body">
          <ticket-fields></ticket-fields>
          <ticket-thread></ticket-thread>
          <apps-panel></apps-panel>
          <aside class="rail">
            <button class="who" aria-label="Usuário">${icon("user")}</button>
            <button class="tile" aria-label="Aplicativos">${icon("apps")}</button>
            <button class="more" aria-label="Adicionar aplicativo">${icon("plus")}</button>
          </aside>
        </div>
        <footer class="foot">
          <div class="macro">
            ${icon("bolt")}
            <select aria-label="Macro"><option>Aplicar macro</option></select>
            ${icon("chevron")}
          </div>
          <button class="close">Fechar aba${icon("chevron")}</button>
          <button class="send">Enviar como <b>Novo</b></button>
          <button class="split" aria-label="Opções de envio">${icon("chevron")}</button>
        </footer>
        <guide-overlay></guide-overlay>
      </main>
    `;
  }
}
